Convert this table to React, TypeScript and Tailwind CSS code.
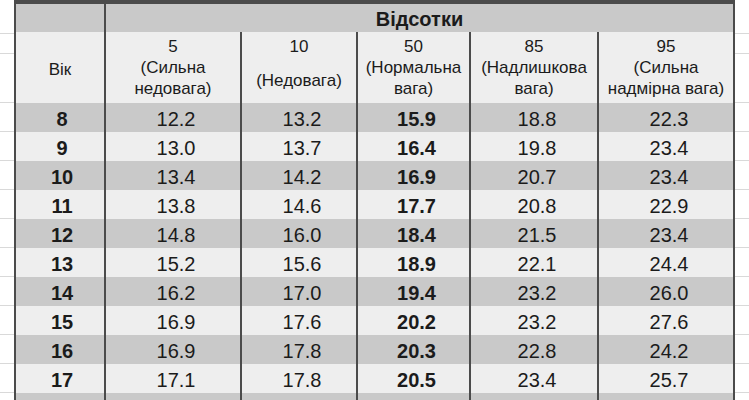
import React from 'react';

const rows: [string, string, string, string, string, string][] = [
  ['8', '12.2', '13.2', '15.9', '18.8', '22.3'],
  ['9', '13.0', '13.7', '16.4', '19.8', '23.4'],
  ['10', '13.4', '14.2', '16.9', '20.7', '23.4'],
  ['11', '13.8', '14.6', '17.7', '20.8', '22.9'],
  ['12', '14.8', '16.0', '18.4', '21.5', '23.4'],
  ['13', '15.2', '15.6', '18.9', '22.1', '24.4'],
  ['14', '16.2', '17.0', '19.4', '23.2', '26.0'],
  ['15', '16.9', '17.6', '20.2', '23.2', '27.6'],
  ['16', '16.9', '17.8', '20.3', '22.8', '24.2'],
  ['17', '17.1', '17.8', '20.5', '23.4', '25.7'],
];

const cols = 'grid grid-cols-[88px_136px_116px_113px_128px_136px]';

// spreadsheet gutter on each side of the table
function Gutter({ extra }: { extra?: boolean }) {
  return (
    <div className="flex flex-col border-b border-[#d9d9d9]">
      {extra && <div className="h-[22px] border-b border-[#d9d9d9]" />}
    </div>
  );
}

function Side({ children, h, extra }: { children: React.ReactNode; h: string; extra?: boolean }) {
  return (
    <div className={`grid grid-cols-[14px_721px_14px] ${h}`}>
      <Gutter extra={extra} />
      {children}
      <Gutter extra={extra} />
    </div>
  );
}

export default function App() {
  return (
    <div className="w-[749px] h-[400px] overflow-hidden bg-white font-['Liberation_Sans',Arial,sans-serif] text-[#1b1b1b]">
      {/* bottom of the title bar */}
      <div className="grid grid-cols-[14px_721px_14px] h-[4px]">
        <div />
        <div className="bg-[#4b4b4b]" />
        <div />
      </div>

      {/* Відсотки */}
      <Side h="h-[28px]">
        <div className="grid grid-cols-[88px_1fr] border-x-2 border-[#4b4b4b] bg-[#c9c9c9]">
          <div />
          <div className="border-l-2 border-[#4b4b4b] flex items-center justify-center text-[20px] font-bold">
            Відсотки
          </div>
        </div>
      </Side>

      {/* column titles */}
      <Side h="h-[71px]" extra>
        <div className={`${cols} border-x-2 border-[#4b4b4b] bg-[#eeeeee] text-[17px] leading-[21px] text-center`}>
          <div className="flex items-center justify-center pt-[3px]">Вік</div>
          <div className="border-l-2 border-[#4b4b4b] flex flex-col justify-center">
            <span>5</span>
            <span>(Сильна</span>
            <span>недовага)</span>
          </div>
          <div className="border-l-2 border-[#4b4b4b] flex flex-col pt-[4px]">
            <span>10</span>
            <span className="mt-[13px]">(Недовага)</span>
          </div>
          <div className="border-l-2 border-[#4b4b4b] flex flex-col justify-center">
            <span>50</span>
            <span>(Нормальна</span>
            <span>вага)</span>
          </div>
          <div className="border-l-2 border-[#4b4b4b] flex flex-col justify-center">
            <span>85</span>
            <span>(Надлишкова</span>
            <span>вага)</span>
          </div>
          <div className="border-l-2 border-[#4b4b4b] flex flex-col justify-center">
            <span>95</span>
            <span>(Сильна</span>
            <span>надмірна вага)</span>
          </div>
        </div>
      </Side>

      {rows.map((r, i) => (
        <Side key={r[0]} h="h-[29px]">
          <div
            className={`${cols} border-x-2 border-[#4b4b4b] text-[20px] leading-[24px] ${
              i % 2 === 0 ? 'bg-[#c9c9c9]' : 'bg-[#eeeeee]'
            }`}
          >
            <div className="flex items-center justify-center pl-[4px] pt-[2px] font-bold">{r[0]}</div>
            {r.slice(1).map((v, j) => (
              <div
                key={j}
                className={`border-l-2 border-[#4b4b4b] flex items-center justify-center pl-[6px] pt-[2px] ${
                  j === 2 ? 'font-bold' : ''
                }`}
              >
                {v}
              </div>
            ))}
          </div>
        </Side>
      ))}

      {/* next row, cut off by the edge */}
      <Side h="h-[29px]">
        <div className={`${cols} border-x-2 border-[#4b4b4b] bg-[#c9c9c9]`}>
          <div />
          <div className="border-l-2 border-[#4b4b4b]" />
          <div className="border-l-2 border-[#4b4b4b]" />
          <div className="border-l-2 border-[#4b4b4b]" />
          <div className="border-l-2 border-[#4b4b4b]" />
          <div className="border-l-2 border-[#4b4b4b]" />
        </div>
      </Side>
    </div>
  );
}
